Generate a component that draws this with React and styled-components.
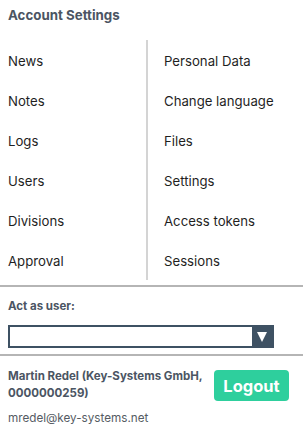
import * as React from 'react';
import styled, { createGlobalStyle } from 'styled-components';

const GlobalStyle = createGlobalStyle`
  body {
    margin: 0;
    background: #ffffff;
    font-family: Inter, "Liberation Sans", sans-serif;
  }
`;

const Panel = styled.div`
  width: 303px;
  height: 436px;
  overflow: hidden;
  background: #fff;
`;

const Title = styled.h2`
  margin: 0;
  height: 30px;
  padding: 0 8px;
  display: flex;
  align-items: center;
  font-size: 13.3px;
  font-weight: 700;
  color: #4b5563;
`;

const Menu = styled.div`
  display: grid;
  grid-template-columns: 148px 1fr;
  margin-top: 10px;
`;

const Column = styled.div`
  display: flex;
  flex-direction: column;
  padding-left: ${props => (props.$right ? '16px' : '8px')};
  border-right: ${props => (props.$right ? 'none' : '2px solid #d4d4d4')};
`;

const MenuLink = styled.a`
  height: 40px;
  padding-top: 1px;
  box-sizing: border-box;
  display: flex;
  align-items: center;
  font-size: 13.2px;
  color: #1f1f1f;
  text-decoration: none;
`;

const Divider = styled.hr`
  margin: 5px 0 0;
  border: none;
  border-top: 2px solid #b5b5b5;
`;

const ActAs = styled.div`
  padding: 9px 8px 1px;
`;

const Label = styled.div`
  font-size: 11.5px;
  font-weight: 700;
  color: #4b5563;
  height: 20px;
  display: flex;
  align-items: center;
`;

const SelectBox = styled.div`
  margin-top: 9px;
  display: flex;
  width: 266px;
  height: 23px;
  box-sizing: border-box;
  border: 2px solid #3e5163;
`;

const SelectField = styled.div`
  flex: 1;
`;

const SelectArrow = styled.div`
  width: 20px;
  background: #3e5163;
  display: flex;
  align-items: center;
  justify-content: center;
`;

const UserBlock = styled.div`
  padding: 8px 8px 0;
`;

const UserRow = styled.div`
  display: flex;
  justify-content: space-between;
  align-items: flex-start;
`;

const UserName = styled.div`
  font-size: 11.5px;
  font-weight: 700;
  line-height: 17px;
  color: #4b5563;
  padding-top: 4px;
`;

const LogoutButton = styled.button`
  margin-top: 6px;
  margin-right: 6px;
  width: 75px;
  height: 31px;
  border: none;
  border-radius: 4px;
  background: #2ecf9d;
  color: #fff;
  font-family: inherit;
  font-size: 16.5px;
  font-weight: 700;
  flex-shrink: 0;
`;

const Email = styled.div`
  margin-top: 9px;
  font-size: 11.7px;
  color: #555b63;
`;

const left = ['News', 'Notes', 'Logs', 'Users', 'Divisions', 'Approval'];
const right = ['Personal Data', 'Change language', 'Files', 'Settings', 'Access tokens', 'Sessions'];

export default function App() {
  return (
    <Panel>
      <GlobalStyle />
      <Title>Account Settings</Title>
      <Menu>
        <Column>
          {left.map(item => (
            <MenuLink key={item}>{item}</MenuLink>
          ))}
        </Column>
        <Column $right>
          {right.map(item => (
            <MenuLink key={item}>{item}</MenuLink>
          ))}
        </Column>
      </Menu>
      <Divider />
      <ActAs>
        <Label>Act as user:</Label>
        <SelectBox>
          <SelectField />
          <SelectArrow>
            <svg width="12" height="12" viewBox="0 0 12 12">
              <polygon points="1,1 11,1 6,11" fill="#fff" />
            </svg>
          </SelectArrow>
        </SelectBox>
      </ActAs>
      <Divider />
      <UserBlock>
        <UserRow>
          <UserName>
            Martin Redel (Key-Systems GmbH,
            <br />
            0000000259)
          </UserName>
          <LogoutButton>Logout</LogoutButton>
        </UserRow>
        <Email>mredel@key-systems.net</Email>
      </UserBlock>
    </Panel>
  );
}
